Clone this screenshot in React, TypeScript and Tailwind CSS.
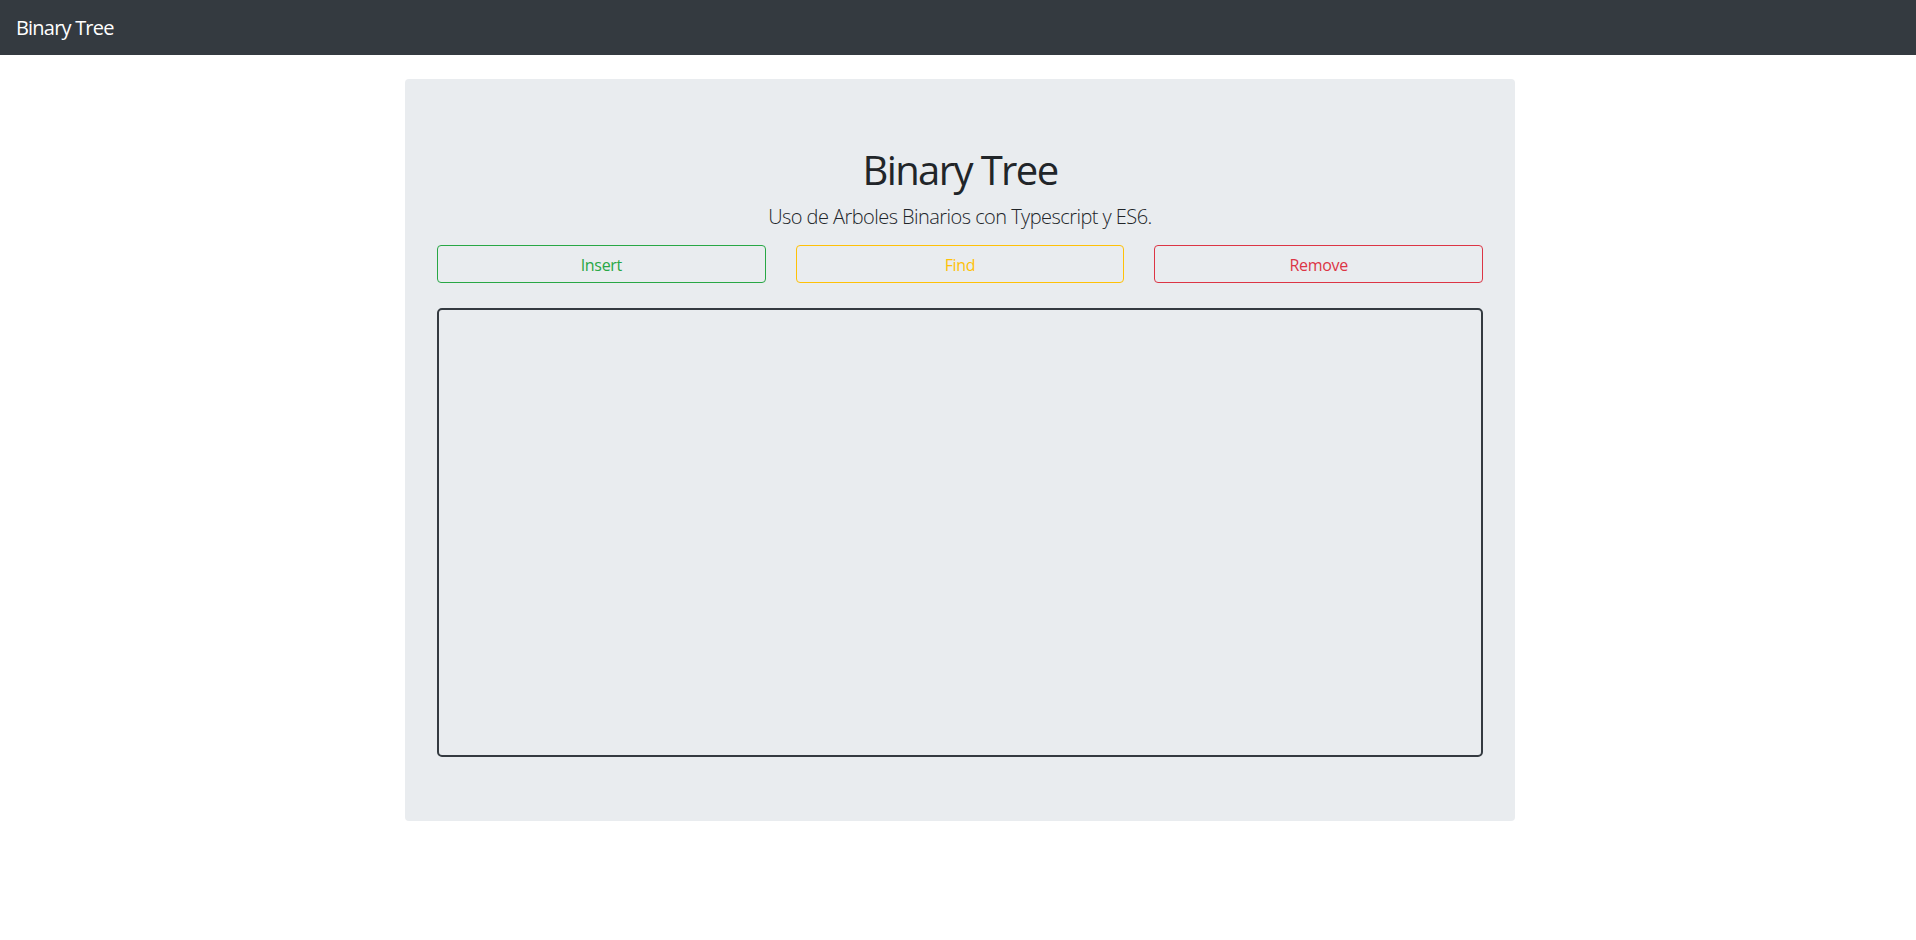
export default function App() {
  const font = { fontFamily: '"Open Sans", "Noto Sans", sans-serif' };
  return (
    <div className="min-h-screen bg-white text-[#212529]" style={font}>
      <nav className="flex h-[55px] items-center bg-[#343a40] px-4">
        <span className="text-[20px] tracking-[-0.8px] text-white">Binary Tree</span>
      </nav>
      <div className="pl-[4px]">
        <div className="mx-auto mt-6 w-[1110px] rounded bg-[#e9ecef] px-8 pt-[67px] pb-16">
          <h1 className="text-center text-[40px] leading-[48px] font-normal tracking-[-1.6px]">Binary Tree</h1>
          <p className="mt-2 mb-[13px] text-center text-[20px] leading-[30px] font-light tracking-[-0.55px]">
            Uso de Arboles Binarios con Typescript y ES6.
          </p>
          <div className="grid grid-cols-3 gap-[30px]">
            <button className="h-[38px] rounded border border-[#28a745] pt-[2px] text-[16px] tracking-[-0.3px] text-[#28a745]">Insert</button>
            <button className="h-[38px] rounded border border-[#ffc107] pt-[2px] text-[16px] tracking-[-0.3px] text-[#ffc107]">Find</button>
            <button className="h-[38px] rounded border border-[#dc3545] pt-[2px] text-[16px] tracking-[-0.3px] text-[#dc3545]">Remove</button>
          </div>
          <div className="mt-[25px] h-[449px] w-full rounded-[5px] border-2 border-[#343a40]" />
        </div>
      </div>
    </div>
  );
}
